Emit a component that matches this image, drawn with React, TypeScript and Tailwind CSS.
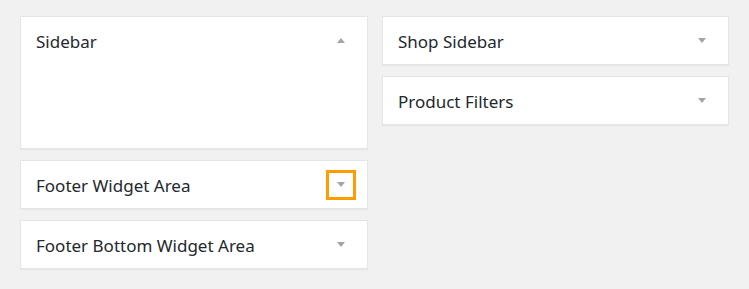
import React from 'react';

interface Area {
  name: string;
  open?: boolean;
  focused?: boolean;
}

const left: Area[] = [
  { name: 'Sidebar', open: true },
  { name: 'Footer Widget Area', focused: true },
  { name: 'Footer Bottom Widget Area' },
];

const right: Area[] = [{ name: 'Shop Sidebar' }, { name: 'Product Filters' }];

const Arrow = ({ up }: { up?: boolean }) => (
  <svg width="8" height="5" viewBox="0 0 8 5" className="block">
    {up ? <path d="M0 5 L4 0 L8 5 Z" fill="#a0a5aa" /> : <path d="M0 0 L8 0 L4 5 Z" fill="#a0a5aa" />}
  </svg>
);

const WidgetArea = ({ area }: { area: Area }) => (
  <div className="bg-white border border-[#e5e5e5] shadow-[0_1px_1px_rgba(0,0,0,0.04)]">
    <div className="h-[47px] flex items-center justify-between pl-[15px] pr-[11px]">
      <h2 className="text-[17px] text-[#23282d] leading-none pt-[2px]">{area.name}</h2>
      <button
        className={`w-[30px] h-[30px] flex items-center justify-center border-[3px] ${
          area.focused ? 'border-[#ff9c00]' : 'border-transparent'
        }`}
      >
        <Arrow up={area.open} />
      </button>
    </div>
    {area.open && <div className="h-[84px]" />}
  </div>
);

export default function App() {
  return (
    <div
      className="w-[749px] h-[289px] bg-[#f1f1f1] flex gap-[14px] pl-[20px] pt-[16px]"
      style={{ fontFamily: '"Noto Sans", sans-serif' }}
    >
      <div className="w-[348px] flex flex-col gap-[11px]">
        {left.map((a) => (
          <WidgetArea key={a.name} area={a} />
        ))}
      </div>
      <div className="w-[347px] flex flex-col gap-[11px]">
        {right.map((a) => (
          <WidgetArea key={a.name} area={a} />
        ))}
      </div>
    </div>
  );
}
